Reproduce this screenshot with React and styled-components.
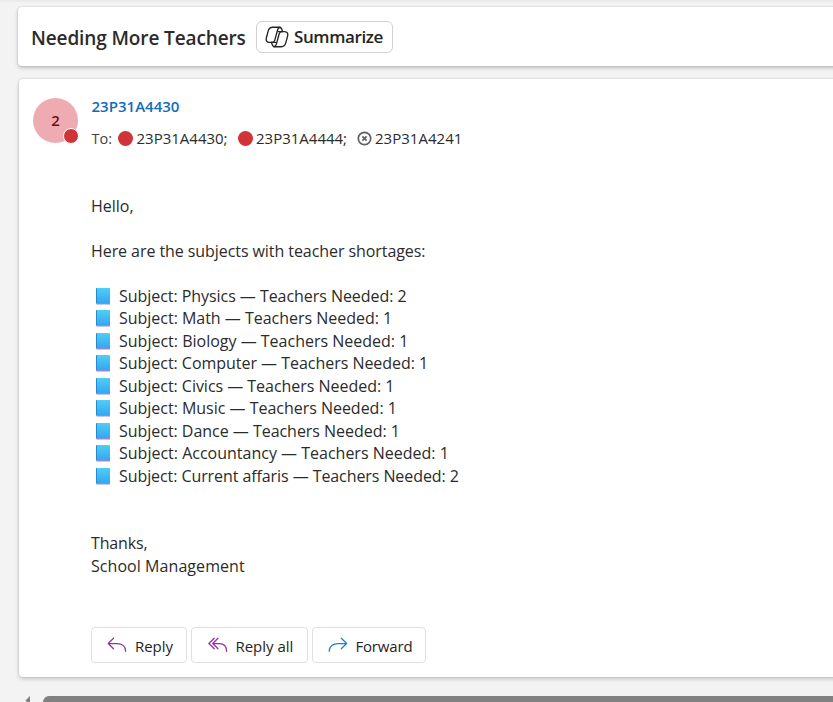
import React from "react";
import styled, { createGlobalStyle } from "styled-components";

const GlobalStyle = createGlobalStyle`
  * { box-sizing: border-box; }
  html, body { margin: 0; overflow: hidden; background: #f3f3f3; }
  body { font-family: "Open Sans", "Noto Sans", sans-serif; color: #2b2b2b; }
`;

const Page = styled.div`
  height: 702px;
  padding: 7px 0 0 18px;
  overflow: hidden;
  display: flex;
  flex-direction: column;
  background: linear-gradient(#e8e8e8 0, #f3f3f3 3px);
`;

const SubjectCard = styled.header`
  height: 59px;
  flex: none;
  margin-right: -12px;
  padding: 0 0 0 13px;
  display: flex;
  align-items: center;
  gap: 10px;
  background: #fff;
  border-radius: 4px;
  box-shadow: 0 0 2px rgba(0, 0, 0, 0.18), 0 2px 4px rgba(0, 0, 0, 0.2);
`;

const Title = styled.h1`
  width: 215px;
  margin: 3px 0 0;
  font-size: 19px;
  line-height: 27px;
  font-weight: 600;
  white-space: nowrap;
  letter-spacing: ${(p) => p.$spacing}px;
`;

const SummarizeButton = styled.button`
  width: 137px;
  height: 32px;
  margin-top: 1px;
  padding: 0 0 1px 8px;
  display: flex;
  align-items: center;
  gap: 5px;
  background: #fff;
  border: 1px solid #d1d1d1;
  border-radius: 6px;
  font: 600 17px/24px "Open Sans", sans-serif;
  letter-spacing: ${(p) => p.$spacing}px;
  color: #242424;
`;

const MessageCard = styled.article`
  height: 598px;
  flex: none;
  margin: 13px -12px 0 1px;
  padding: 18px 0 0 14px;
  background: #fff;
  border-radius: 4px;
  box-shadow: 0 0 2px rgba(0, 0, 0, 0.18), 0 2px 4px rgba(0, 0, 0, 0.18);
`;

const MessageHeader = styled.div`
  display: flex;
  gap: 13.5px;
  height: 97.7px;
`;

const Avatar = styled.div`
  position: relative;
  width: 45px;
  height: 45px;
  margin-top: 0.6px;
  border-radius: 50%;
  background: #eeacb2;
  color: #750b1c;
  font-size: 15px;
  font-weight: 600;
  line-height: 44px;
  text-align: center;
`;

const PresenceBadge = styled.span`
  position: absolute;
  right: -1px;
  bottom: -1.4px;
  width: 16px;
  height: 16px;
  border: 1px solid #fff;
  border-radius: 50%;
  background: #d13438;
`;

const Sender = styled.div`
  height: 19px;
  font-size: 15px;
  font-weight: 600;
  line-height: 19px;
  letter-spacing: ${(p) => p.$spacing}px;
  color: #0f6cbd;
`;

const Recipients = styled.div`
  display: flex;
  align-items: center;
  margin-top: 11px;
  height: 22px;
  font-size: 15px;
  white-space: nowrap;
`;

const ToLabel = styled.span`
  width: 26.5px;
  font-size: 14.5px;
  color: #424242;
`;

const Recipient = styled.span`
  display: flex;
  align-items: center;
  gap: 3.5px;
  width: ${(p) => p.$width}px;
  letter-spacing: ${(p) => p.$spacing}px;
`;

const BusyDot = styled.span`
  width: 15px;
  height: 15px;
  flex: none;
  border-radius: 50%;
  background: #d13438;
`;

const Body = styled.div`
  padding-left: 58px;
  font-size: 16px;
`;

const Line = styled.div`
  height: 22.5px;
  line-height: 22.5px;
  white-space: pre;
  display: flex;
  letter-spacing: ${(p) => p.$spacing ?? 0}px;
`;

const BookSlot = styled.span`
  width: 28px;
  height: 22px;
  padding: 2.9px 0 0 4.8px;
  flex: none;
  line-height: 0;
`;

const Actions = styled.div`
  display: flex;
  gap: 4px;
  margin: 49.8px 0 0 58.4px;
`;

const ActionButton = styled.button`
  width: ${(p) => p.$width}px;
  height: 36px;
  padding: 2px 0 0 ${(p) => p.$pad}px;
  display: flex;
  align-items: center;
  gap: 7.5px;
  background: #fff;
  border: 1px solid #e0e0e0;
  border-radius: 4px;
  font: 400 15px/20px "Open Sans", sans-serif;
  letter-spacing: ${(p) => p.$spacing}px;
  white-space: nowrap;
  color: #242424;

  svg { flex: none; margin-top: -2px; }
`;

const ScrollBar = styled.div`
  display: flex;
  flex: none;
  margin-top: 19px;
  padding-left: 7px;
  height: 12px;
  gap: 12px;
`;

const ScrollThumb = styled.div`
  flex: 1;
  margin-right: -10px;
  border-radius: 6px;
  background: #818181;
`;

const CopilotIcon = () => (
  <svg width="24" height="24" viewBox="0 0 24 24" fill="none" stroke="#242424" strokeWidth="1.35" strokeLinejoin="round" strokeLinecap="round">
    <path d="M10.6 17.3H4.4C1.6 17.3.7 15.4 1.4 12.8L3.3 5.7C4 3.1 5.2 2.2 7.7 2.2H14.1C15.9 2.2 16.6 3.3 17 4.8L17.5 6.6" />
    <path d="M13.4 6.6H19.6C22.4 6.6 23.3 8.5 22.6 11.1L20.7 18.2C20 20.8 18.8 21.7 16.3 21.7H9.9C8.1 21.7 7.4 20.6 7 19.1L6.5 17.3" />
    <path d="M15.1 2.2C13.7 2.2 13.1 3.1 12.7 4.5L9.8 15.1C9.4 16.6 8.7 17.3 7.3 17.3M8.9 21.7C10.3 21.7 10.9 20.8 11.3 19.4L14.2 8.8C14.6 7.3 15.3 6.6 16.7 6.6" />
  </svg>
);

const UnknownIcon = () => (
  <svg width="15" height="15" viewBox="0 0 15 15" fill="none" stroke="#616161" strokeWidth="1.7">
    <circle cx="7.5" cy="7.5" r="6.2" />
    <path d="m5.4 5.4 4.2 4.2m0-4.2L5.4 9.6" />
  </svg>
);

const BookIcon = () => (
  <svg width="15" height="17" viewBox="0 0 15 17">
    <defs>
      <linearGradient id="cover" x2="0" y2="1">
        <stop stopColor="#50cef4" />
        <stop offset="1" stopColor="#35a7f2" />
      </linearGradient>
    </defs>
    <path fill="#8f8bdc" d="M0 14h14v2.4H.8Q0 16.4 0 15Z" />
    <path fill="url(#cover)" d="M1 0h12.4q.6 0 .6.6V15H0V1Q0 0 1 0Z" />
    <path fill="#248bd0" d="M0 1Q0 0 1 0v15H0Z" />
  </svg>
);

const ReplyIcon = () => (
  <svg width="20" height="18" viewBox="0 0 20 18" fill="none" stroke="#9332a5" strokeWidth="1.25" strokeLinecap="round" strokeLinejoin="round">
    <path d="M6.5 2.2 1.2 7.5l5.3 5.3M1.5 7.5H10C15 7.5 18.6 10.4 18.6 15.3" />
  </svg>
);

const ReplyAllIcon = () => (
  <svg width="20" height="18" viewBox="0 0 20 18" fill="none" stroke="#9332a5" strokeWidth="1.25" strokeLinecap="round" strokeLinejoin="round">
    <path d="M6.2 2.2.9 7.5l5.3 5.3M10 2.2 4.7 7.5l5.3 5.3M4.8 7.5h6.4c4.8 0 7.4 3 7.4 7.8" />
  </svg>
);

const ForwardIcon = () => (
  <svg width="20" height="18" viewBox="0 0 20 18" fill="none" stroke="#1683d8" strokeWidth="1.25" strokeLinecap="round" strokeLinejoin="round">
    <path d="m13.3 2.2 5.3 5.3-5.3 5.3M18.5 7.5H10C5 7.5 1.2 10.4 1.2 15.3" />
  </svg>
);

const ScrollArrow = () => (
  <svg width="6" height="12" viewBox="0 0 6 12">
    <path d="M5 0v9L.5 4.5Z" fill="#818181" />
  </svg>
);

const subjects = [
  { name: "Physics", count: 2, spacing: -0.05 },
  { name: "Math", count: 1, spacing: -0.02 },
  { name: "Biology", count: 1, spacing: 0 },
  { name: "Computer", count: 1, spacing: -0.03 },
  { name: "Civics", count: 1, spacing: -0.03 },
  { name: "Music", count: 1, spacing: -0.02 },
  { name: "Dance", count: 1, spacing: -0.03 },
  { name: "Accountancy", count: 1, spacing: 0 },
  { name: "Current affaris", count: 2, spacing: -0.08 },
];

export default function App() {
  return (
    <>
      <GlobalStyle />
      <Page>
        <SubjectCard>
          <Title $spacing={-0.12}>Needing More Teachers</Title>
          <SummarizeButton $spacing={-0.4}>
            <CopilotIcon />
            Summarize
          </SummarizeButton>
        </SubjectCard>
        <MessageCard>
          <MessageHeader>
            <Avatar>
              2<PresenceBadge />
            </Avatar>
            <div>
              <Sender $spacing={0.02}>23P31A4430</Sender>
              <Recipients>
                <ToLabel>To:</ToLabel>
                <Recipient $width={119.5} $spacing={0}><BusyDot />23P31A4430;</Recipient>
                <Recipient $width={119} $spacing={0}><BusyDot />23P31A4444;</Recipient>
                <Recipient $width={120} $spacing={0.03}><UnknownIcon />23P31A4241</Recipient>
              </Recipients>
            </div>
          </MessageHeader>
          <Body>
            <Line>Hello,</Line>
            <Line />
            <Line $spacing={-0.07}>Here are the subjects with teacher shortages:</Line>
            <Line />
            {subjects.map((s) => (
              <Line key={s.name} $spacing={s.spacing}>
                <BookSlot><BookIcon /></BookSlot>
                {`Subject: ${s.name} — Teachers Needed: ${s.count}`}
              </Line>
            ))}
            <Line />
            <Line />
            <Line $spacing={-0.15}>Thanks,</Line>
            <Line $spacing={0.06}>School Management</Line>
          </Body>
          <Actions>
            <ActionButton $width={96} $pad={15} $spacing={0}><ReplyIcon />Reply</ActionButton>
            <ActionButton $width={116.5} $pad={15.5} $spacing={0}><ReplyAllIcon />Reply all</ActionButton>
            <ActionButton $width={114.5} $pad={15} $spacing={-0.15}><ForwardIcon />Forward</ActionButton>
          </Actions>
        </MessageCard>
        <ScrollBar>
          <ScrollArrow />
          <ScrollThumb />
        </ScrollBar>
      </Page>
    </>
  );
}
